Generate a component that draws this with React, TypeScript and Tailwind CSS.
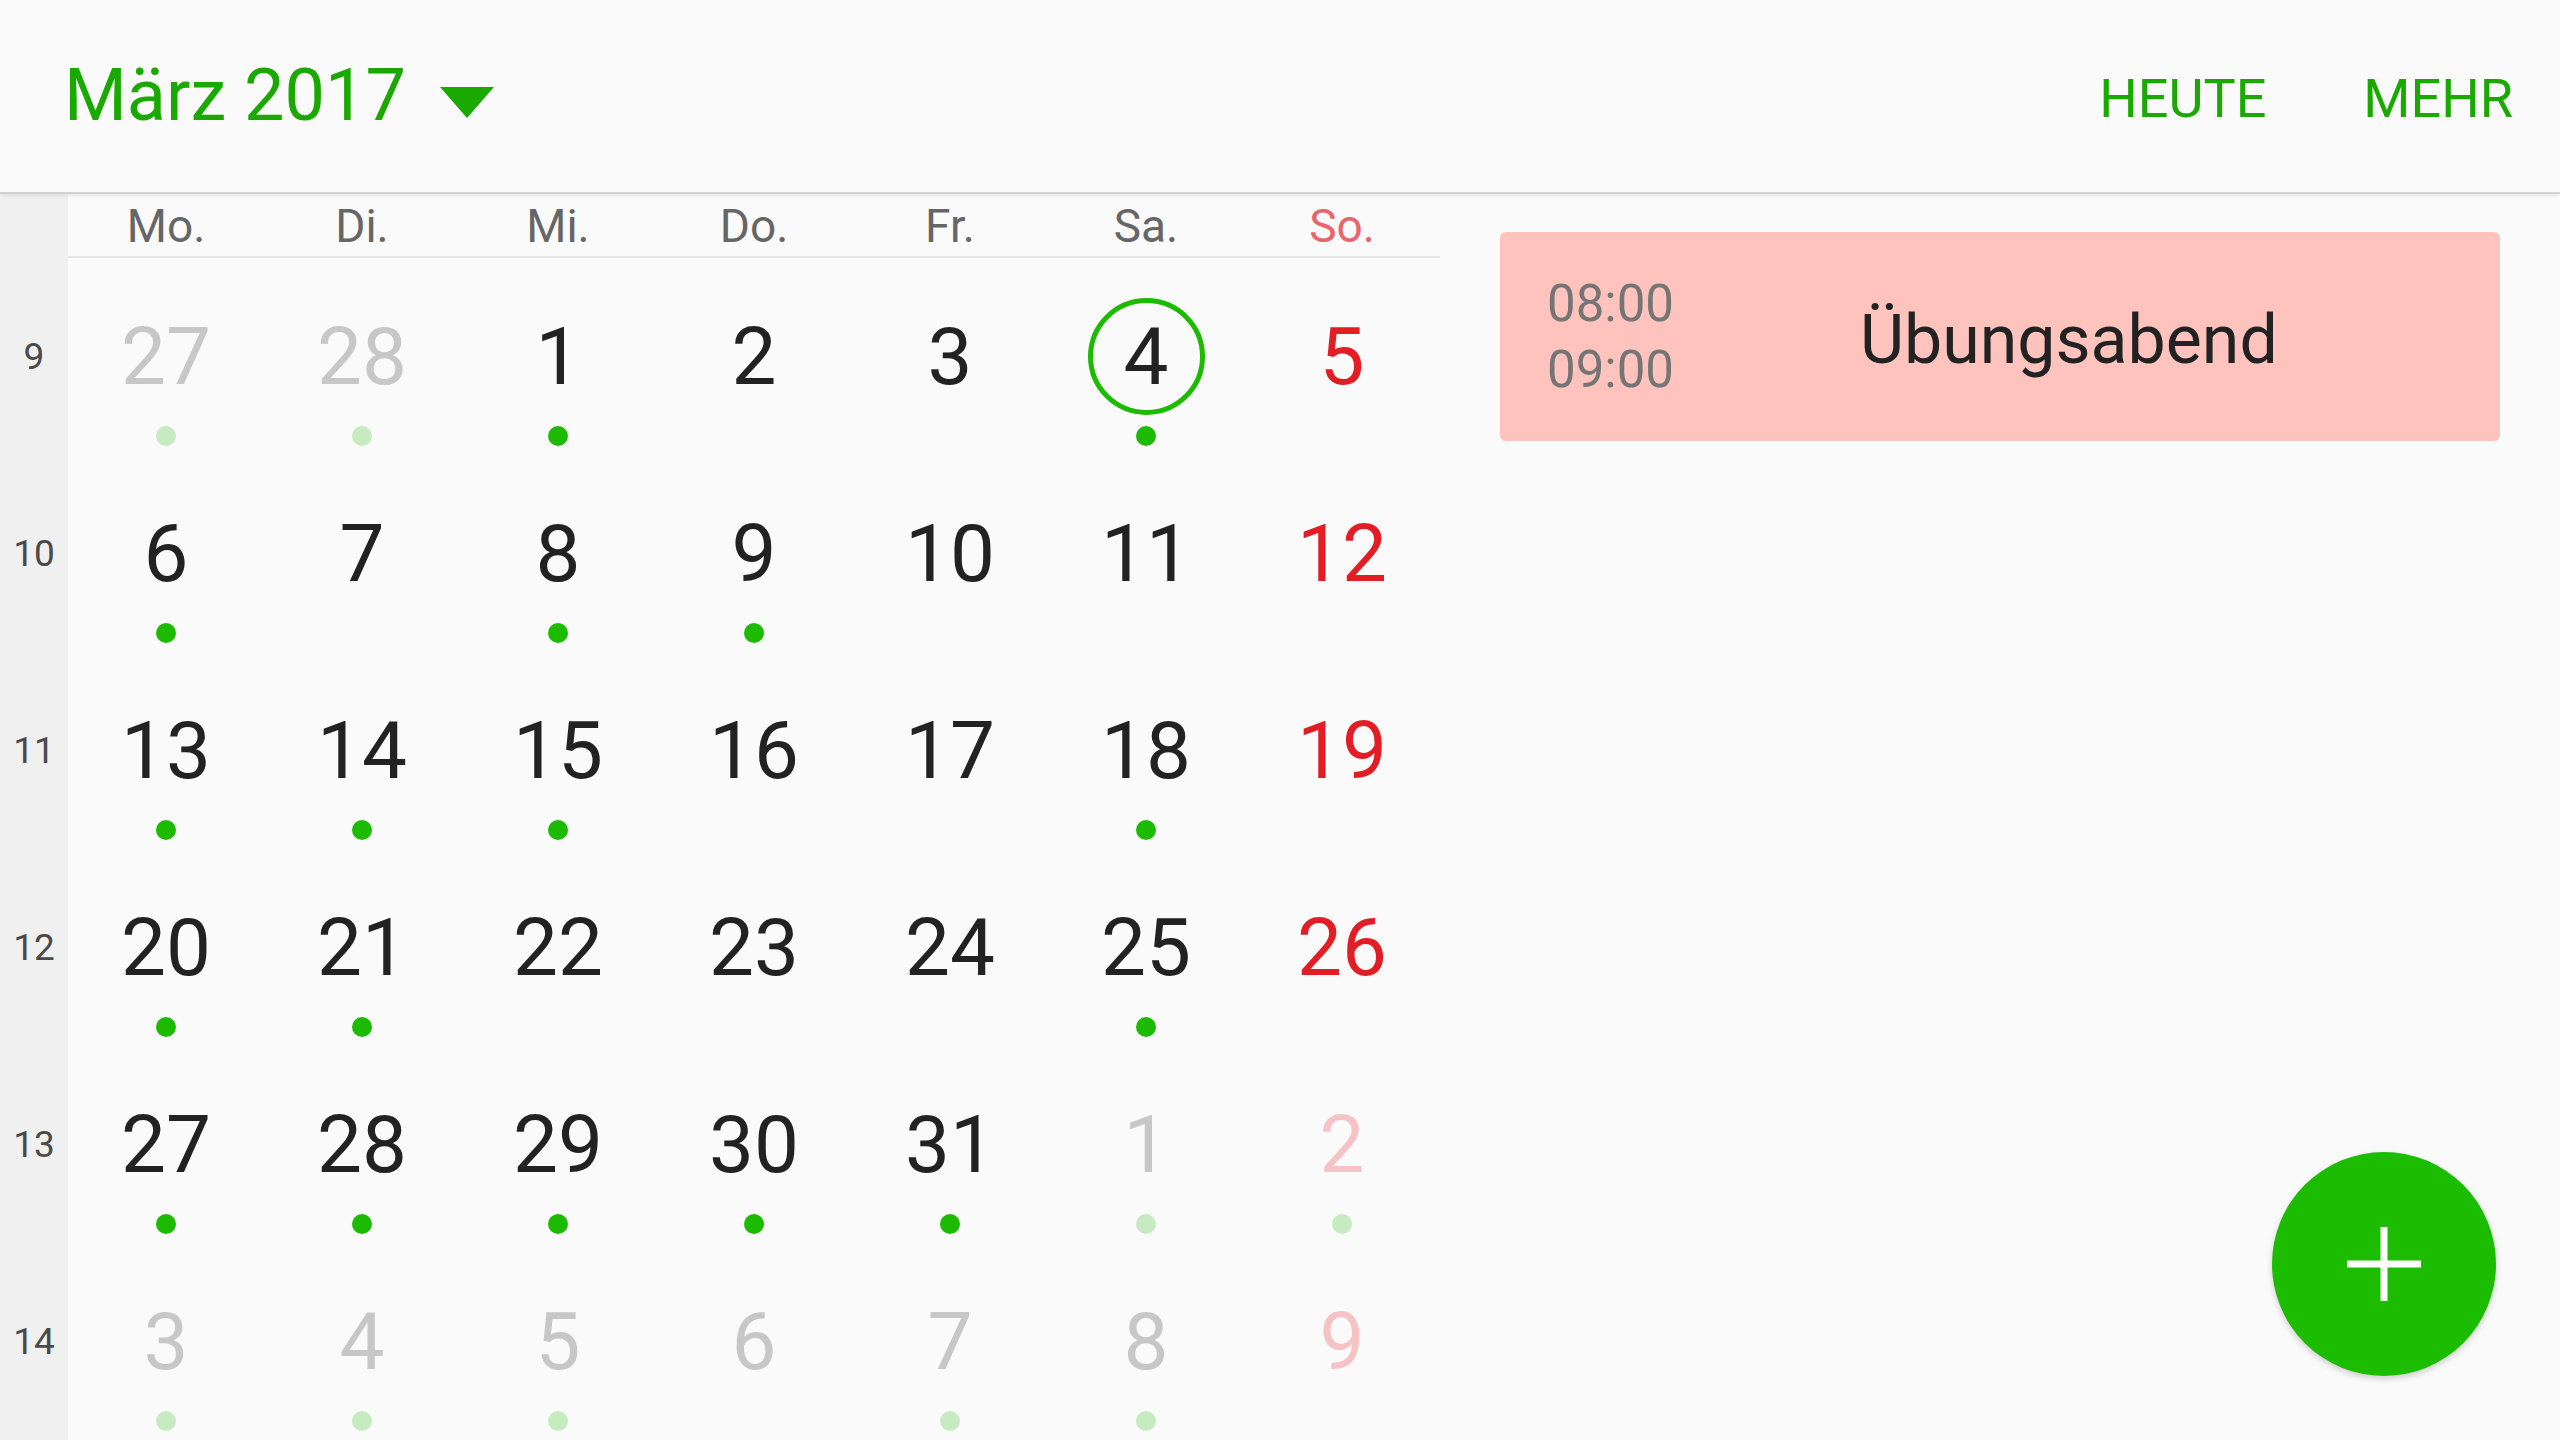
import React from "react";

type Day = { n: number; muted?: boolean; dot?: boolean; today?: boolean };

const weekdays = ["Mo.", "Di.", "Mi.", "Do.", "Fr.", "Sa.", "So."];

// March 2017, weeks 9-14
const weeks: { week: number; days: Day[] }[] = [
  {
    week: 9,
    days: [
      { n: 27, muted: true, dot: true },
      { n: 28, muted: true, dot: true },
      { n: 1, dot: true },
      { n: 2 },
      { n: 3 },
      { n: 4, dot: true, today: true },
      { n: 5 },
    ],
  },
  {
    week: 10,
    days: [{ n: 6, dot: true }, { n: 7 }, { n: 8, dot: true }, { n: 9, dot: true }, { n: 10 }, { n: 11 }, { n: 12 }],
  },
  {
    week: 11,
    days: [{ n: 13, dot: true }, { n: 14, dot: true }, { n: 15, dot: true }, { n: 16 }, { n: 17 }, { n: 18, dot: true }, { n: 19 }],
  },
  {
    week: 12,
    days: [{ n: 20, dot: true }, { n: 21, dot: true }, { n: 22 }, { n: 23 }, { n: 24 }, { n: 25, dot: true }, { n: 26 }],
  },
  {
    week: 13,
    days: [
      { n: 27, dot: true },
      { n: 28, dot: true },
      { n: 29, dot: true },
      { n: 30, dot: true },
      { n: 31, dot: true },
      { n: 1, muted: true, dot: true },
      { n: 2, muted: true, dot: true },
    ],
  },
  {
    week: 14,
    days: [
      { n: 3, muted: true, dot: true },
      { n: 4, muted: true, dot: true },
      { n: 5, muted: true, dot: true },
      { n: 6, muted: true },
      { n: 7, muted: true, dot: true },
      { n: 8, muted: true, dot: true },
      { n: 9, muted: true },
    ],
  },
];

function dayColor(day: Day, sunday: boolean) {
  if (day.muted) return sunday ? "text-[#f5c3c5]" : "text-[#c7c7c7]";
  return sunday ? "text-[#e31d25]" : "text-[#222222]";
}

function DayCell({ day, sunday }: { day: Day; sunday: boolean }) {
  return (
    <div className="flex h-[197px] flex-col items-center pt-[40px]">
      <div
        className={`flex h-[117px] w-[117px] items-center justify-center rounded-full ${
          day.today ? "border-[5px] border-[#1cbb00]" : ""
        }`}
      >
        <span className={`text-[80px] leading-none ${dayColor(day, sunday)}`}>{day.n}</span>
      </div>
      <div
        className={`mt-[11px] h-5 w-5 rounded-full ${
          day.dot ? (day.muted ? "bg-[#c6ebc0]" : "bg-[#1cbb00]") : "bg-transparent"
        }`}
      />
    </div>
  );
}

export default function App() {
  return (
    <div
      className="relative flex h-[1440px] w-[2560px] flex-col overflow-hidden bg-[#fafafa]"
      style={{ fontFamily: "Roboto, 'Noto Sans', sans-serif" }}
    >
      {/* Top bar */}
      <header className="relative z-10 flex h-[194px] shrink-0 items-center border-b-2 border-[#d2d2d2] bg-[#fafafa] pl-[64px] pr-[47px] shadow-[0_2px_3px_rgba(0,0,0,0.07)]">
        <div className="flex items-center">
          <span className="text-[72px] leading-none text-[#1aa900]">März 2017</span>
          <svg className="ml-[34px] mt-[12px]" width="54" height="31" viewBox="0 0 54 31">
            <polygon points="0,0 54,0 27,31" fill="#1aa900" />
          </svg>
        </div>
        <div className="ml-auto mt-[5px] flex items-center gap-[97px] text-[54px] leading-none text-[#1aa900]">
          <span>HEUTE</span>
          <span>MEHR</span>
        </div>
      </header>

      <div className="flex flex-1">
        {/* Week numbers */}
        <div className="flex w-[68px] shrink-0 flex-col bg-[#f0f0f0]">
          <div className="h-[64px]" />
          {weeks.map((w) => (
            <div key={w.week} className="flex h-[197px] items-center justify-center text-[37px] leading-none text-[#4a4a4a]">
              {w.week}
            </div>
          ))}
        </div>

        {/* Month grid */}
        <div className="w-[1372px] shrink-0">
          <div className="grid h-[64px] grid-cols-7 border-b-2 border-[#e6e6e6] pt-[2px]">
            {weekdays.map((d, i) => (
              <div
                key={d}
                className={`flex items-center justify-center text-[46px] leading-none ${
                  i === 6 ? "text-[#e9646b]" : "text-[#666666]"
                }`}
              >
                {d}
              </div>
            ))}
          </div>
          {weeks.map((w) => (
            <div key={w.week} className="grid grid-cols-7">
              {w.days.map((day, i) => (
                <DayCell key={`${w.week}-${i}`} day={day} sunday={i === 6} />
              ))}
            </div>
          ))}
        </div>

        {/* Agenda */}
        <div className="flex-1 px-[60px] pt-[38px]">
          <div className="flex h-[209px] items-center rounded-[6px] bg-[#fdc3bc] pl-[47px]">
            <div className="flex w-[313px] flex-col text-[51px] leading-[66px] text-[#757575]">
              <span>08:00</span>
              <span>09:00</span>
            </div>
            <span className="mt-[6px] text-[68px] leading-none text-[#222222]">Übungsabend</span>
          </div>
        </div>
      </div>

      {/* Floating add button */}
      <button className="absolute bottom-[64px] right-[64px] flex h-[224px] w-[224px] items-center justify-center rounded-full bg-[#1cbc00] shadow-[0_3px_6px_rgba(0,0,0,0.18)]">
        <svg width="74" height="74" viewBox="0 0 74 74">
          <rect x="0" y="33.5" width="74" height="7" fill="#ffffff" />
          <rect x="33.5" y="0" width="7" height="74" fill="#ffffff" />
        </svg>
      </button>
    </div>
  );
}
